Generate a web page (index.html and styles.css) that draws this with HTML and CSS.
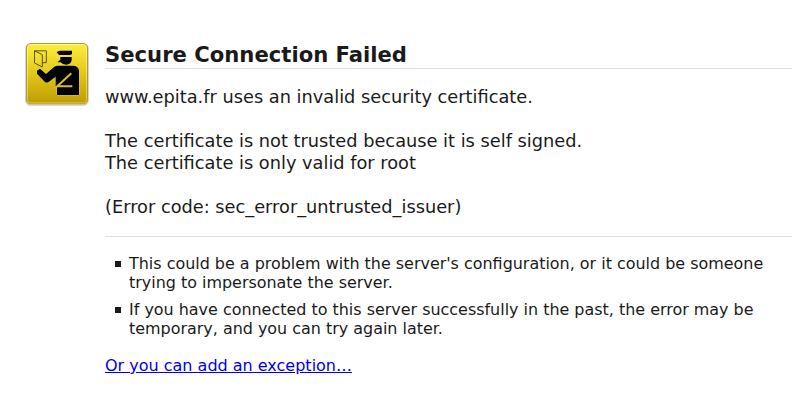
FILE: index.html
```
<!DOCTYPE html>
<html lang="en">
<head>
  <meta charset="UTF-8">
  <title>Secure Connection Failed</title>
  <link rel="stylesheet" href="styles.css">
</head>
<body>

  <div class="error-page">
    <svg class="icon" width="74" height="72" viewBox="0 0 222 216">
      <defs>
        <linearGradient id="gold" x1="0" y1="0" x2="0" y2="1">
          <stop offset="0" stop-color="#fbed3c"/>
          <stop offset="0.5" stop-color="#e3c71b"/>
          <stop offset="1" stop-color="#bf9c00"/>
        </linearGradient>
        <linearGradient id="rim" x1="0" y1="0" x2="0" y2="1">
          <stop offset="0" stop-color="#fff79a"/>
          <stop offset="1" stop-color="#dcc247"/>
        </linearGradient>
      </defs>
      <rect class="shadow" x="18" y="19" width="186" height="182" rx="14"/>
      <rect class="frame" x="19.5" y="16.5" width="183" height="181" rx="13"/>
      <rect x="22.5" y="19.5" width="177" height="175" rx="10" fill="url(#gold)" stroke="url(#rim)" stroke-width="3"/>
      <!-- passport -->
      <path class="passport" d="M43.5 38.5L67 50V87L43.5 75ZM43.5 38.5H79V74H67"/>
      <!-- officer -->
      <g class="officer">
        <path d="M110 43Q114 38 122 38H156V48L151 51H117Z"/>
        <path d="M121 57H155V66Q153 80 139 80Q127 80 122 73H112L121 65Z"/>
        <path d="M51 98L60 92L78 108L103 86Q107 83 114 83H160Q177 85 177 100V171H111V146H107V116L86 132Q80 136 74 131L51 107Z"/>
      </g>
      <path class="sash" d="M105 151L154 106M111 145H157"/>
    </svg>

    <div class="content">
      <h1 class="title">Secure Connection Failed</h1>

      <div class="description">
        <p>www.epita.fr uses an invalid security certificate.</p>
        <p>The certificate is not trusted because it is self signed.<br>The certificate is only valid for root</p>
        <p>(Error code: sec_error_untrusted_issuer)</p>
      </div>

      <ul class="reasons">
        <li>This could be a problem with the server's configuration, or it could be someone trying to impersonate the server.</li>
        <li>If you have connected to this server successfully in the past, the error may be temporary, and you can try again later.</li>
      </ul>

      <a class="exception" href="#">Or you can add an exception…</a>
    </div>
  </div>

</body>
</html>
```
FILE: styles.css
```
body {
  margin: 0;
  background-color: #ffffff;
  color: #1a1a1a;
  font-family: "DejaVu Sans", sans-serif;
  font-size: 16px;
  line-height: 19px;
}

.error-page {
  display: flex;
  align-items: flex-start;
  padding: 38px 0 0 20px;
}

.icon {
  flex: none;
  margin-right: 11px;
}

.shadow {
  fill: none;
  stroke: #000000;
  stroke-opacity: 0.2;
  stroke-width: 5;
}

.frame {
  fill: #b59619;
  stroke: #b59a2c;
  stroke-width: 3;
}

.passport {
  fill: none;
  stroke: #5e5210;
  stroke-width: 3;
}

.officer {
  fill: #000000;
  stroke: #efd95a;
  stroke-opacity: 0.6;
  stroke-width: 3;
  paint-order: stroke;
}

.sash {
  fill: none;
  stroke: #d9bd27;
  stroke-width: 6;
}

.content {
  flex: 1;
}

.title {
  margin: 0;
  padding-top: 4px;
  border-bottom: 1px solid #deded6;
  font-size: 21.15px;
  line-height: 26px;
}

.description {
  padding: 17px 0 18px;
  border-bottom: 1px solid #deded6;
  font-size: 17.77px;
  line-height: 22px;
}

.description p {
  margin: 0 0 22px;
}

.description p:last-child {
  margin-bottom: 0;
}

.reasons {
  margin: 17px 0 18px;
  padding: 0;
  list-style: none;
  font-size: 15.94px;
}

.reasons li {
  margin-bottom: 8px;
  padding-left: 24px;
  background: linear-gradient(#1a1a1a, #1a1a1a) 10px 7px / 6px 6px no-repeat;
}

.exception {
  color: #0000ee;
}
```
